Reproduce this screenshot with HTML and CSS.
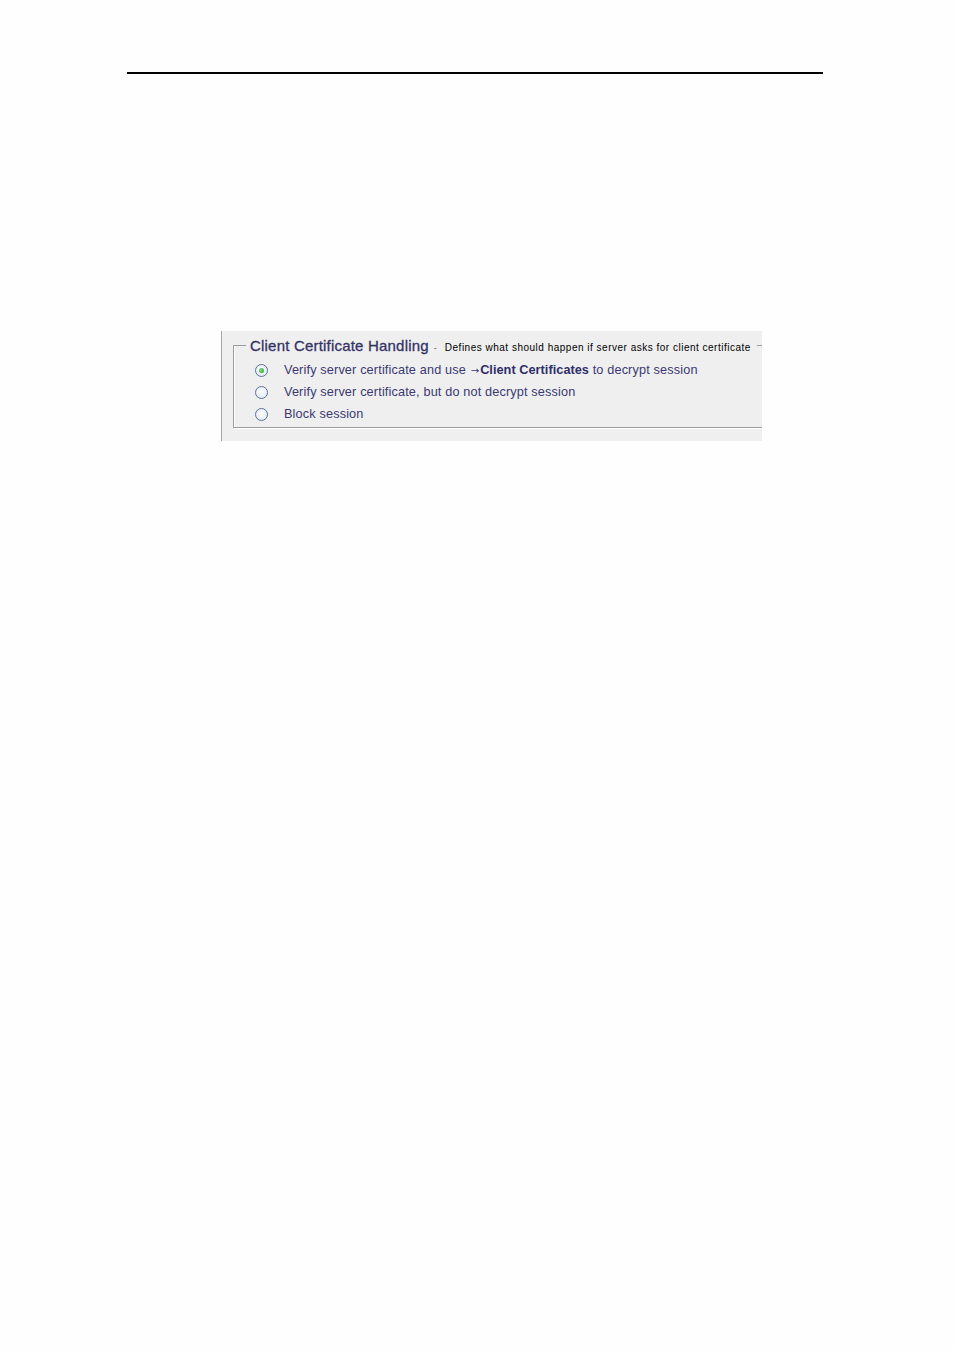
FILE: index.html
```html
<!DOCTYPE html>
<html>
<head>
<meta charset="utf-8">
<link rel="stylesheet" href="styles.css">
</head>
<body>
<div class="page">
  <div class="rule"></div>
  <div class="panel">
    <div class="fieldset">
      <div class="legend">
        <span class="title">Client Certificate Handling</span>
        <span class="dash">-</span>
        <span class="desc">Defines what should happen if server asks for client certificate</span>
      </div>
      <div class="options">
        <div class="opt"><span class="radio checked"></span><span class="label">Verify server certificate and use <span class="arrow">&rarr;</span><b>Client Certificates</b> to decrypt session</span></div>
        <div class="opt"><span class="radio"></span><span class="label">Verify server certificate, but do not decrypt session</span></div>
        <div class="opt"><span class="radio"></span><span class="label">Block session</span></div>
      </div>
    </div>
  </div>
</div>
</body>
</html>
```
FILE: styles.css
```css
html, body { margin: 0; padding: 0; background: #fefefe; }
body { font-family: "Liberation Sans", Arial, sans-serif; }
.page { width: 954px; height: 1350px; overflow: hidden; }
.rule { margin: 72px 0 0 127px; width: 696px; height: 2px; background: #000; }
.panel {
  margin-left: 221px; margin-top: 257px;
  width: 541px; height: 110px;
  background: #efefef;
  border-left: 1px solid #a6a6a6;
  padding: 14px 0 0 11px;
  box-sizing: border-box;
  overflow: hidden;
}
.fieldset {
  border-left: 1px solid #9c9c9c;
  box-shadow: inset 1px 0 0 #ffffff;
  border-bottom: 1px solid #9c9c9c;
  height: 83px;
  position: relative;
  box-sizing: border-box;
}
.fieldset::before {
  content: ""; position: absolute; left: 0; top: 0; width: 12px; height: 1px; background: #9c9c9c;
}
.fieldset::after {
  content: ""; position: absolute; left: 0; right: 0; bottom: -2px; height: 1px; background: #ffffff;
}
.legend {
  position: absolute; left: 16px; top: -8px;
  display: flex; align-items: baseline; white-space: nowrap;
}
.legend::after {
  content: ""; width: 6px; height: 1px; background: #9c9c9c; margin-left: 6px; align-self: center; position: relative; top: 0px;
}
.title { font-size: 15px; color: #333366; letter-spacing: 0.2px; -webkit-text-stroke: 0.3px #333366; }
.dash { font-size: 9px; color: #666; margin: 0 8px 0 5px; }
.desc { font-size: 10px; color: #000; letter-spacing: 0.5px; }
.options { position: absolute; left: 21px; top: 18px; display: flex; flex-direction: column; gap: 8px; }
.opt { display: flex; align-items: center; height: 14px; }
.radio {
  width: 11px; height: 11px; border-radius: 50%;
  border: 1px solid #56749a;
  background: radial-gradient(circle at 50% 40%, #ffffff 0%, #e8ecf2 70%, #cdd6e2 100%);
  position: relative; flex: none;
}
.radio.checked::after {
  content: ""; position: absolute; left: 3px; top: 3px; width: 5px; height: 5px; border-radius: 50%;
  background: radial-gradient(circle at 40% 40%, #7ee07e, #1c9a2a);
}
.label { margin-left: 16px; font-size: 12.7px; color: #3a3a72; letter-spacing: 0.15px; }
.label b { color: #2e2e6a; letter-spacing: 0.05px; }
.arrow { font-family: "DejaVu Sans", sans-serif; font-size: 10px; margin: 0 1px 0 1px; }
```
